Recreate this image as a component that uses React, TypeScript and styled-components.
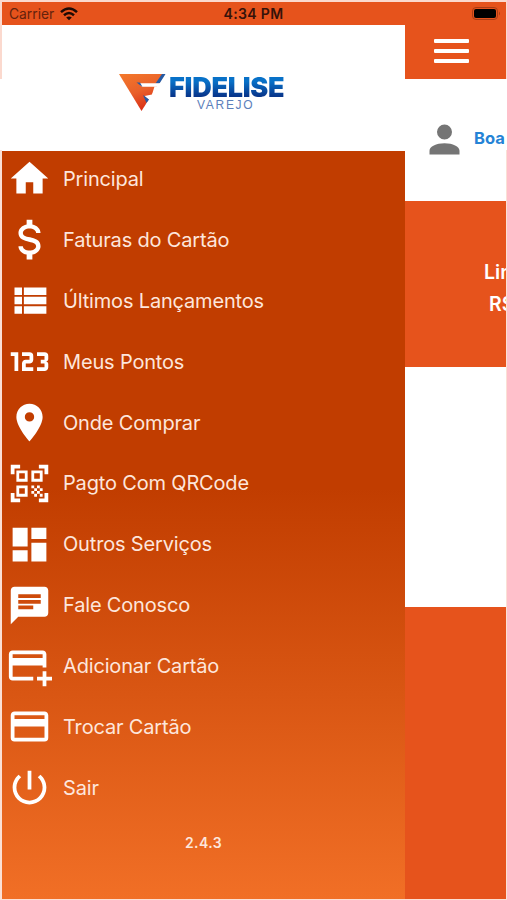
import React from 'react';
import styled, { createGlobalStyle } from 'styled-components';

const GlobalStyle = createGlobalStyle`
  * { box-sizing: border-box; }
  body { margin: 0; background: #fff; font-family: Inter, Roboto, sans-serif; }
`;

const Frame = styled.div`
  width: 507px;
  height: 900px;
  padding: 2px 1px 1px 2px;
  overflow: hidden;
  display: flex;
  flex-direction: column;
  background: linear-gradient(#fbd9ce 0 79px, #fff 79px 150px, #fbe0d5 150px);
`;

const StatusBar = styled.header`
  flex: 0 0 23px;
  display: grid;
  grid-template-columns: 1fr auto 1fr;
  align-items: center;
  padding: 0 5px 0 7px;
  background: #e6531c;
  color: #35120a;
  font-size: 13px;
`;

const Carrier = styled.div`
  display: flex;
  align-items: center;
  gap: 6px;
  font-size: 13.8px;
  color: #64220d;
`;

const Clock = styled.div`
  margin-right: 3px;
  font-weight: 600;
  font-size: 14px;
  letter-spacing: 0.35px;
`;

const Battery = styled.svg`
  justify-self: end;
  display: block;
`;

const Body = styled.div`
  flex: 1;
  min-height: 0;
  display: flex;
`;

const Drawer = styled.aside`
  flex: 0 0 403px;
  display: flex;
  flex-direction: column;
  background: linear-gradient(#c13d00 0, #c13d00 53%, #f16f26 100%);
`;

const Brand = styled.div`
  flex: 0 0 126px;
  display: flex;
  align-items: flex-start;
  padding: 48px 0 0 116px;
  background: #fff;
`;

const BrandText = styled.div`
  width: 118px;
  margin-left: 3px;
  white-space: nowrap;
`;

const BrandName = styled.div`
  margin-top: 4px;
  font-size: 27px;
  line-height: 22px;
  font-weight: 900;
  letter-spacing: -0.25px;
  background: linear-gradient(#0871c8 20%, #08378c 85%);
  background-clip: text;
  -webkit-background-clip: text;
  color: transparent;
`;

const BrandSub = styled.div`
  display: flex;
  margin: 1px 0 0 28px;
  font-family: 'Liberation Sans', Arial, sans-serif;
  font-size: 12px;
  line-height: 11px;
  letter-spacing: 1.7px;
  color: #5c80bb;
`;

const Menu = styled.nav`
  display: flex;
  flex-direction: column;
  margin-top: -3px;
`;

const Item = styled.a`
  height: 60.95px;
  display: flex;
  align-items: center;
  color: #fde6dc;
`;

const IconSlot = styled.span`
  flex: 0 0 54px;
  height: 60px;
  display: flex;
  align-items: center;
  justify-content: center;
`;

const Glyph = styled.svg<{ $size: number }>`
  flex: none;
  width: ${(p) => p.$size}px;
  height: ${(p) => p.$size}px;
  fill: #fff;
`;

const Label = styled.span`
  margin-left: 7px;
  padding-top: 0.6px;
  font-size: 20px;
  line-height: 26px;
  letter-spacing: -0.17px;
  white-space: nowrap;
`;

const Version = styled.div`
  margin-top: 15px;
  text-align: center;
  font-size: 14px;
  line-height: 20px;
  font-weight: 600;
  letter-spacing: 0.4px;
  color: #fde6dc;
`;

const Page = styled.main`
  flex: 1;
  min-width: 0;
  overflow: hidden;
  display: flex;
  flex-direction: column;
  background: #fff;
`;

const AppBar = styled.div`
  flex: 0 0 54px;
  padding: 14px 0 0 29px;
  background: #e6531c;
`;

const Burger = styled.div`
  width: 35px;
  display: grid;
  gap: 6px;
`;

const Bar = styled.i`
  height: 4px;
  border-radius: 1px;
  background: #fff;
`;

const Greeting = styled.div`
  flex: 0 0 122px;
  display: flex;
  padding: 37px 0 0 17px;
  color: #2583d6;
  font-size: 16.5px;
  line-height: 44px;
  font-weight: 700;
  white-space: nowrap;
`;

const Avatar = styled.svg`
  flex: none;
  width: 45px;
  height: 45px;
  margin: 1px 7px 0 0;
  fill: #757575;
`;

const Limit = styled.section`
  flex: 0 0 166px;
  padding-top: 55px;
  background: #e6531c;
  color: #fff;
  font-size: 19.5px;
  font-weight: 600;
  line-height: 32px;
  white-space: nowrap;
`;

const LimitLine = styled.div<{ $indent: number }>`
  padding-left: ${(p) => p.$indent}px;
`;

const Gap = styled.div`
  flex: 0 0 240px;
`;

const Footer = styled.div`
  flex: 1;
  background: #e6531c;
`;

type Entry = { label: string; path: string; size?: number };

const entries: Entry[] = [
  { label: 'Principal', path: 'M10 20V14H14V20H19V12H22L12 3L2 12H5V20H10Z' },
  {
    label: 'Faturas do Cartão',
    size: 53,
    path: 'M7 15H9C9 16.08 10.37 17 12 17S15 16.08 15 15C15 13.9 13.96 13.5 11.76 12.97C9.64 12.44 7 11.78 7 9C7 7.21 8.47 5.69 10.7 5.18V3H13.3V5.18C15.53 5.69 17 7.21 17 9H15C15 7.92 13.63 7 12 7S9 7.92 9 9C9 10.1 10.04 10.5 12.24 11.03C14.36 11.56 17 12.22 17 15C17 16.79 15.53 18.31 13.3 18.82V21H10.7V18.82C8.47 18.31 7 16.79 7 15Z',
  },
  { label: 'Últimos Lançamentos', path: 'M9 5V9H21V5M9 19H21V15H9M9 14H21V10H9M4 9H8V5H4M4 19H8V15H4M4 14H8V10H4V14Z' },
  {
    label: 'Meus Pontos',
    path: 'M4 17V9H2V7H6V17H4M22 15C22 16.11 21.1 17 20 17H16V15H20V13H18V11H20V9H16V7H20A2 2 0 0 1 22 9V10.5A1.5 1.5 0 0 1 20.5 12A1.5 1.5 0 0 1 22 13.5V15M14 15V17H8V13C8 11.89 8.9 11 10 11H12V9H8V7H12A2 2 0 0 1 14 9V11C14 12.11 13.1 13 12 13H10V15H14Z',
  },
  { label: 'Onde Comprar', path: 'M12 2C8.13 2 5 5.13 5 9c0 5.25 7 13 7 13s7-7.75 7-13c0-3.87-3.13-7-7-7zm0 9.5a2.5 2.5 0 0 1 0-5 2.5 2.5 0 0 1 0 5z' },
  {
    label: 'Pagto Com QRCode',
    path: 'M9.5 6.5v3h-3v-3h3M11 5H5v6h6V5zm-1.5 9.5v3h-3v-3h3M11 13H5v6h6v-6zm6.5-6.5v3h-3v-3h3M19 5h-6v6h6V5zm-6 8h1.5v1.5H13V13zm1.5 1.5H16V16h-1.5v-1.5zM16 13h1.5v1.5H16V13zm-3 3h1.5v1.5H13V16zm1.5 1.5H16V19h-1.5v-1.5zM16 16h1.5v1.5H16V16zm1.5-1.5H19V16h-1.5v-1.5zm0 3H19V19h-1.5v-1.5zM22 7h-2V4h-3V2h5v5zm0 15v-5h-2v3h-3v2h5zM2 22h5v-2H4v-3H2v5zM2 2v5h2V4h3V2H2z',
  },
  { label: 'Outros Serviços', path: 'M13 3V9H21V3M13 21H21V11H13M3 21H11V15H3M3 13H11V3H3V13Z' },
  { label: 'Fale Conosco', path: 'M20 2H4c-1.1 0-1.99.9-1.99 2L2 22l4-4h14c1.1 0 2-.9 2-2V4c0-1.1-.9-2-2-2zM6 9h12v2H6V9zm8 5H6v-2h8v2zm4-6H6V6h12v2z' },
  { label: 'Adicionar Cartão', path: 'M21 18H24V20H21V23H19V20H16V18H19V15H21V18M19 8V6H3V8H19M19 12H3V18H14V20H3C1.89 20 1 19.1 1 18V6C1 4.89 1.89 4 3 4H19C20.11 4 21 4.9 21 6V13H19V12Z' },
  { label: 'Trocar Cartão', path: 'M20 8H4V6H20M20 18H4V12H20M20 4H4C2.89 4 2 4.89 2 6V18A2 2 0 0 0 4 20H20A2 2 0 0 0 22 18V6C22 4.89 21.1 4 20 4Z' },
  {
    label: 'Sair',
    path: 'M13 3h-2v10h2V3zm4.83 2.17l-1.42 1.42C17.99 7.86 19 9.81 19 12c0 3.87-3.13 7-7 7s-7-3.13-7-7c0-2.19 1.01-4.14 2.58-5.42L6.17 5.17C4.23 6.82 3 9.26 3 12c0 4.97 4.03 9 9 9s9-4.03 9-9c0-2.74-1.23-5.18-3.17-6.83z',
  },
];

function Logo() {
  return (
    <svg width="48" height="40" viewBox="0 0 48 40">
      <defs>
        <linearGradient id="flame" x1="0" y1="0" x2="0.45" y2="1">
          <stop offset="0" stopColor="#f4792b" />
          <stop offset="0.55" stopColor="#e9602a" />
          <stop offset="1" stopColor="#d92f16" />
        </linearGradient>
      </defs>
      <path d="M1 1H47L23.5 38Z" fill="url(#flame)" />
      <path d="M44 1H47.5L41.5 10.5H37.5Z" fill="#245ba5" />
      <path d="M21 10.3H44L42 13.8H24Z" fill="#fff" />
      <path d="M36.5 13.5H44L31 34L28.5 30L31 27L26.5 23L34 21.5Z" fill="#fff" />
      <path d="M18.5 9.5H22L24.5 14Z" fill="#245ba5" />
      <path d="M25 22L31 26.5L28.5 30Z" fill="#245ba5" />
    </svg>
  );
}

export default function App() {
  return (
    <>
      <GlobalStyle />
      <Frame>
        <StatusBar>
          <Carrier>
            Carrier
            <svg width="18" height="14" viewBox="0 0 18 14" fill="none" stroke="#1d0a05" strokeWidth="2.5">
              <path d="M1 5.2Q9-2.2 17 5.2M4 8.2Q9 3.8 14 8.2" />
              <path d="M9 13.2L6.2 10.4Q9 8.4 11.8 10.4Z" fill="#1d0a05" stroke="none" />
            </svg>
          </Carrier>
          <Clock>4:34 PM</Clock>
          <Battery width="29" height="14" viewBox="0 0 29 14">
            <rect x="0.5" y="0.5" width="25" height="12" rx="3.5" fill="none" stroke="#a83c15" />
            <rect x="2" y="2" width="22" height="9" rx="2" fill="#000" />
            <path d="M27 4.5Q29 6.5 27 8.5Z" fill="#a83c15" />
          </Battery>
        </StatusBar>
        <Body>
          <Drawer>
            <Brand>
              <Logo />
              <BrandText>
                <BrandName>FIDELISE</BrandName>
                <BrandSub>VAREJO</BrandSub>
              </BrandText>
            </Brand>
            <Menu>
              {entries.map((e) => (
                <Item key={e.label}>
                  <IconSlot>
                    <Glyph $size={e.size ?? 45} viewBox="0 0 24 24">
                      <path d={e.path} />
                    </Glyph>
                  </IconSlot>
                  <Label>{e.label}</Label>
                </Item>
              ))}
            </Menu>
            <Version>2.4.3</Version>
          </Drawer>
          <Page>
            <AppBar>
              <Burger>
                <Bar />
                <Bar />
                <Bar />
              </Burger>
            </AppBar>
            <Greeting>
              <Avatar viewBox="0 0 24 24">
                <path d="M12 4a4 4 0 1 1 0 8a4 4 0 0 1 0-8M12 14c4.42 0 8 1.79 8 4v2H4v-2c0-2.21 3.58-4 8-4Z" />
              </Avatar>
              Boa
            </Greeting>
            <Limit>
              <LimitLine $indent={79}>Lim</LimitLine>
              <LimitLine $indent={84}>R$</LimitLine>
            </Limit>
            <Gap />
            <Footer />
          </Page>
        </Body>
      </Frame>
    </>
  );
}
